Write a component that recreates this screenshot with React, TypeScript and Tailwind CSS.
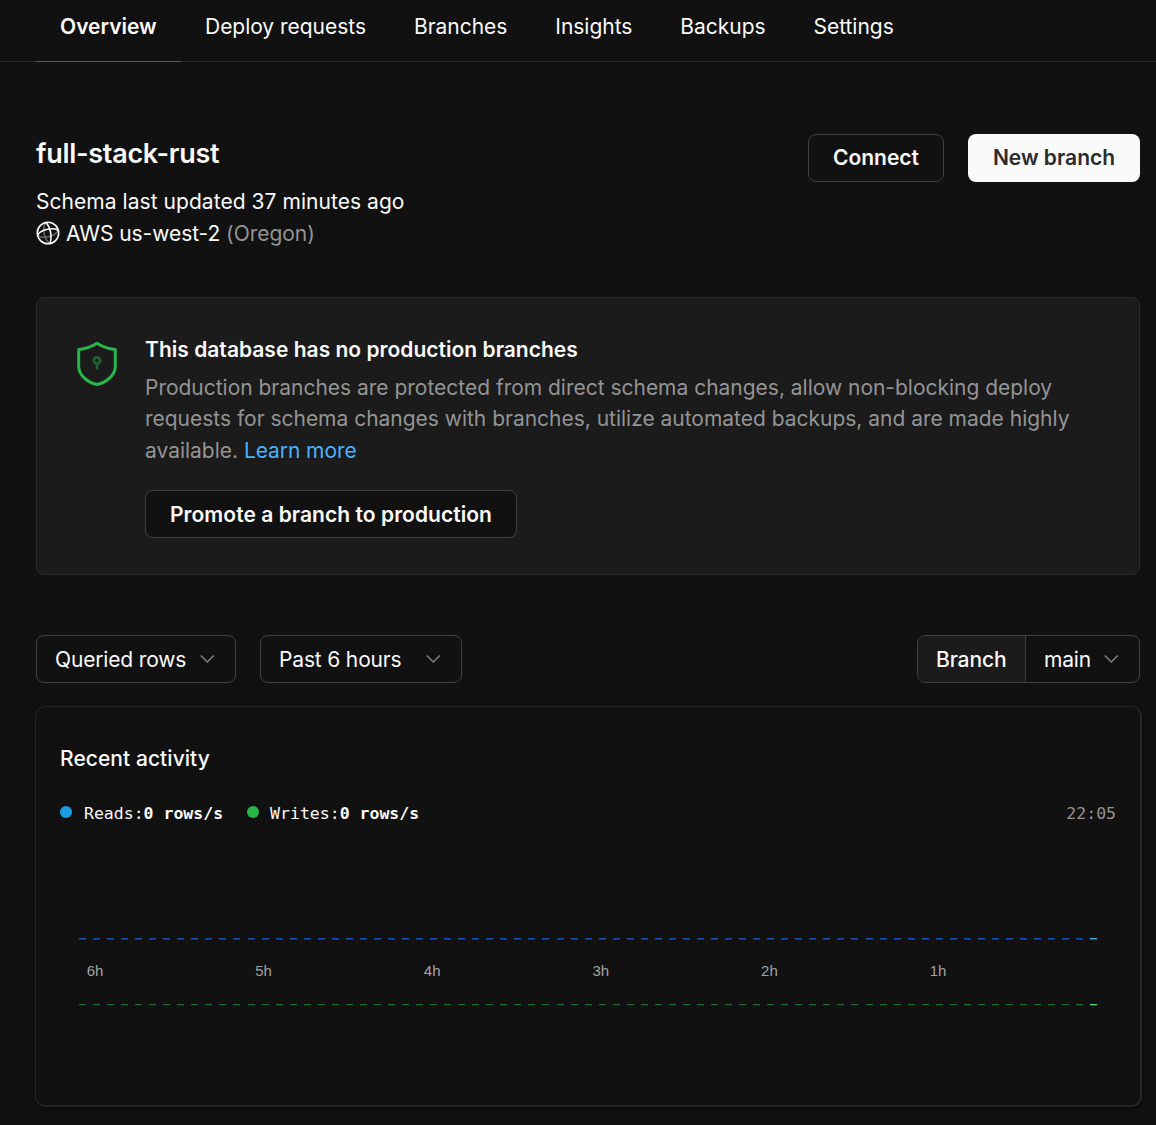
import React from "react";

const tabs = ["Deploy requests", "Branches", "Insights", "Backups", "Settings"];
const hours = ["6h", "5h", "4h", "3h", "2h", "1h"];
const samples = Array.from({ length: 73 }, (_, i) => i);

function Chevron({ className = "" }: { className?: string }) {
  return (
    <svg className={className} width="16" height="10" viewBox="0 0 16 10" fill="none" stroke="#858585" strokeWidth="1.4">
      <path d="M1.800 1.500l6.500 6.500 6.500-6.500" />
    </svg>
  );
}

function Globe() {
  return (
    <svg className="shrink-0" width="24" height="24" viewBox="0 0 24 24" fill="none" strokeWidth="1.6">
      <g stroke="#666666">
        <path d="M9.600 1.400C6 7 7.500 17.500 13.800 22.600" />
        <path d="M1.600 14.200C6 18.500 19 16 22.200 9" />
      </g>
      <g stroke="#fafafa">
        <circle cx="12" cy="12" r="10.700" />
        <path d="M9.600 1.400C14.500 5.500 16.500 16.500 13.800 22.600" />
        <path d="M1.600 14.200C4 9 16 6 22.200 9" />
      </g>
    </svg>
  );
}

function Shield() {
  return (
    <svg className="shrink-0" width="40" height="46" viewBox="0 0 40 46" fill="none" stroke="#27b648" strokeWidth="3">
      <path d="M20 2.200C15.500 5.200 8.500 7.800 1.700 8.400V25.500C1.700 35 12 42 20 43.500C28 42 38.300 35 38.300 25.500V8.400C31.500 7.800 24.500 5.200 20 2.200Z" strokeLinejoin="round" />
      <g stroke="#1f6430" strokeWidth="2.700">
        <circle cx="20" cy="19.500" r="3.200" />
        <path d="M20 22.500V28.500" />
      </g>
    </svg>
  );
}

function Activity() {
  return (
    <svg className="block" width="1056" height="80" viewBox="0 0 1056 80" shapeRendering="crispEdges">
      {samples.map((i) => {
        const x = 19 + i * 14.045;
        const last = i === 72;
        return (
          <g key={i}>
            <rect x={x} y="8" width="7" height="1" fill={last ? "#4aa9d8" : "#1b4ea8"} />
            <rect x={x} y="9" width="7" height="1" fill={last ? "#23546b" : "#16366f"} />
            <rect x={x} y="74" width="7" height="1" fill={last ? "#4fd971" : "#1f6b31"} />
            <rect x={x} y="75" width="7" height="1" fill={last ? "#1c4426" : "#12261a"} />
          </g>
        );
      })}
      <g fill="#a3a3a3" fontFamily="Liberation Sans, sans-serif" fontSize="15" textAnchor="middle">
        {hours.map((h, i) => (
          <text key={h} x={35 + i * 168.6} y="46">{h}</text>
        ))}
      </g>
    </svg>
  );
}

export default function App() {
  return (
    <div className="h-[1125px] overflow-hidden bg-[#111111] font-['Inter',sans-serif] text-[21px] leading-[31.5px] text-[#fafafa]">
      <nav className="flex h-[62px] border-b border-[#2b2b2b] pl-9">
        <a className="-mb-px h-[62px] w-[145px] border-b border-[#0b6ec5] pl-6 pt-[11px] font-semibold">Overview</a>
        <div className="flex gap-12 pl-6 pt-[11px] tracking-[-0.03px]">
          {tabs.map((t) => (
            <a key={t}>{t}</a>
          ))}
        </div>
      </nav>

      <main className="pl-9 pr-4">
        <header className="flex justify-between pt-[72px]">
          <div>
            <h1 className="mt-[1px] text-[27px] font-semibold leading-[38px] tracking-[-0.29px]">full-stack-rust</h1>
            <p className="mt-[13px] tracking-[0.05px]">Schema last updated 37 minutes ago</p>
            <p className="flex items-center gap-1.5">
              <Globe />
              <span className="tracking-[-0.05px]">
                AWS us-west-2 <span className="text-[#949494]">(Oregon)</span>
              </span>
            </p>
          </div>
          <div className="flex h-12 gap-6 font-semibold">
            <button className="w-[136px] rounded-lg border border-[#404040]">Connect</button>
            <button className="w-[172px] rounded-lg bg-[#fafafa] text-[#2b2b2b]">New branch</button>
          </div>
        </header>

        <section className="mt-12 flex h-[278px] gap-7 rounded-lg border border-[#2b2b2b] bg-[#1b1b1b] pl-10 pt-9">
          <div className="pt-[7px]">
            <Shield />
          </div>
          <div>
            <h2 className="font-semibold tracking-[0.02px]">This database has no production branches</h2>
            <p className="mt-[6px] tracking-[-0.015px] text-[#949494]">
              Production branches are protected from direct schema changes, allow non-blocking deploy
              <br />
              requests for schema changes with branches, utilize automated backups, and are made highly
              <br />
              available. <a className="tracking-[-0.08px] text-[#47b2ff]">Learn more</a>
            </p>
            <button className="mt-6 h-12 w-[372px] rounded-lg border border-[#404040] bg-[#111111] pt-[2px] font-semibold tracking-[0.05px]">
              Promote a branch to production
            </button>
          </div>
        </section>

        <div className="mt-[60px] flex h-12 justify-between">
          <div className="flex gap-6">
            <button className="flex w-[200px] items-center justify-between rounded-lg border border-[#404040] pl-[18px] pr-5 pt-[2px] tracking-[-0.16px]">
              Queried rows <Chevron className="mb-[2px]" />
            </button>
            <button className="flex w-[202px] items-center justify-between rounded-lg border border-[#404040] pl-[18px] pr-5 pt-[2px] tracking-[-0.16px]">
              Past 6 hours <Chevron className="mb-[2px]" />
            </button>
          </div>
          <div className="flex w-[223px] overflow-hidden rounded-lg border border-[#404040]">
            <span className="flex w-[108px] items-center border-r border-[#404040] bg-[#1b1b1b] pl-[18px] pt-[2px] font-medium tracking-[-0.1px]">Branch</span>
            <button className="flex flex-1 items-center justify-between pl-[18px] pr-5 pt-[2px] tracking-[-0.2px]">
              main <Chevron className="mb-[2px]" />
            </button>
          </div>
        </div>

        <section className="-ml-px -mr-0.5 mt-[23px] h-[401px] rounded-[10px] border-b-2 border-l border-r-2 border-t border-[#262626] px-6 pt-9 shadow-[0_2px_4px_rgba(0,0,0,0.4)]">
          <h2 className="font-medium tracking-[0.06px]">Recent activity</h2>
          <div className="mt-6 flex h-[31px] items-center font-['DejaVu_Sans_Mono',monospace] text-[16.5px]">
            <i className="mb-1 mr-3 size-3 rounded-full bg-[#1e9de7]" />
            <span>Reads:</span>
            <b>0 rows/s</b>
            <i className="mb-1 ml-6 mr-[11px] size-3 rounded-full bg-[#27b648]" />
            <span>Writes:</span>
            <b>0 rows/s</b>
            <span className="ml-auto text-[#949494]">22:05</span>
          </div>
          <div className="mt-[100.5px]">
            <Activity />
          </div>
        </section>
      </main>
    </div>
  );
}
